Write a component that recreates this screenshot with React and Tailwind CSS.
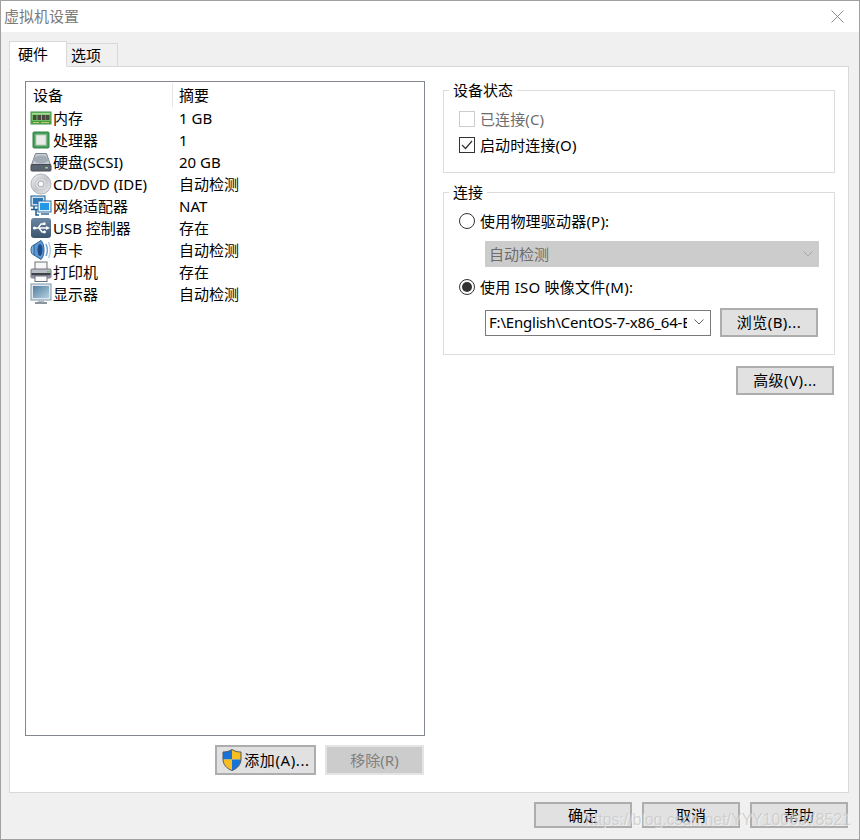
const rows = [
  ['内存', '1 GB', MemoryIcon],
  ['处理器', '1', CpuIcon],
  ['硬盘(SCSI)', '20 GB', DiskIcon],
  ['CD/DVD (IDE)', '自动检测', CdIcon],
  ['网络适配器', 'NAT', NetIcon],
  ['USB 控制器', '存在', UsbIcon],
  ['声卡', '自动检测', SoundIcon],
  ['打印机', '存在', PrinterIcon],
  ['显示器', '自动检测', MonitorIcon],
];

// ── Device icons ──────────────────────────────────────────────────────────────
function MemoryIcon() {
  return (
    <svg width="22" height="22" viewBox="0 0 22 22">
      <rect x="1" y="5" width="20" height="12" fill="#6fbf63" stroke="#3f8f48" />
      <rect x="2" y="6" width="18" height="1.500" fill="#a5dc93" />
      <rect x="3" y="8" width="3.500" height="5" fill="#4a4a3c" />
      <rect x="7.500" y="8" width="3.500" height="5" fill="#4a4a3c" />
      <rect x="12" y="8" width="3.500" height="5" fill="#4a4a3c" />
      <rect x="16" y="8" width="3.500" height="5" fill="#4a4a3c" />
      <rect x="1.500" y="14" width="19" height="2.500" fill="#3d9a45" />
      <path d="M3 15.500h6M11 15.500h8" stroke="#d2c46a" strokeWidth="1" />
    </svg>
  );
}

function CpuIcon() {
  return (
    <svg width="22" height="22" viewBox="0 0 22 22">
      <rect x="3" y="3" width="16" height="16" rx="1" fill="#47a05b" stroke="#2f8045" />
      <rect x="6" y="6" width="10" height="10" fill="#e9ece8" stroke="#c5cfc3" />
    </svg>
  );
}

function DiskIcon() {
  return (
    <svg width="22" height="22" viewBox="0 0 22 22">
      <path d="M5.500 2.500h11L20.500 14h-19z" fill="#c6ccd3" stroke="#7c8590" />
      <ellipse cx="11" cy="8.500" rx="7.500" ry="4" fill="#a3acb6" />
      <rect x="1" y="13.500" width="20" height="6.500" rx="1" fill="#5a6470" stroke="#434a54" />
      <rect x="15" y="16" width="3" height="1.500" fill="#8fd07a" />
    </svg>
  );
}

function CdIcon() {
  return (
    <svg width="22" height="22" viewBox="0 0 22 22">
      <defs>
        <linearGradient id="cd" x1="0" y1="0" x2="1" y2="1">
          <stop offset="0" stopColor="#f0f1f2" />
          <stop offset="0.500" stopColor="#c3c6ca" />
          <stop offset="1" stopColor="#eceded" />
        </linearGradient>
      </defs>
      <circle cx="11" cy="11" r="10" fill="url(#cd)" stroke="#b3b6ba" />
      <circle cx="11" cy="11" r="5.500" fill="#dcdee0" stroke="#c9cbce" />
      <circle cx="11" cy="11" r="3" fill="#f6f6f6" stroke="#a6a9ad" />
      <circle cx="11" cy="11" r="1" fill="#ffffff" />
    </svg>
  );
}

function NetIcon() {
  return (
    <svg width="22" height="22" viewBox="0 0 22 22">
      <rect x="1" y="1" width="14" height="10" fill="#cfe0ee" stroke="#1f5c92" />
      <rect x="3" y="3" width="10" height="6" fill="#2f79b8" />
      <path d="M4 11v3M1 14.500h9M6 14.500V20h3" fill="none" stroke="#1f5c92" strokeWidth="1.500" />
      <rect x="8" y="6" width="13" height="11" fill="#e3edf5" stroke="#2f6ea6" />
      <rect x="10" y="8" width="9" height="7" fill="#2398e6" />
      <rect x="11" y="18" width="8" height="2" fill="#6c8fae" />
    </svg>
  );
}

function UsbIcon() {
  return (
    <svg width="22" height="22" viewBox="0 0 22 22">
      <defs>
        <linearGradient id="usb" x1="0" y1="0" x2="0" y2="1">
          <stop offset="0" stopColor="#6a87a3" />
          <stop offset="1" stopColor="#3c546e" />
        </linearGradient>
      </defs>
      <rect x="1" y="1" width="20" height="20" rx="3" fill="url(#usb)" />
      <path d="M4 11h13M8 11l3-4h3M9 11l3 4h2" fill="none" stroke="#ffffff" strokeWidth="1.300" />
      <path d="M16 9l4 2-4 2z" fill="#ffffff" />
      <rect x="13" y="5.500" width="2.500" height="2.500" fill="#ffffff" />
      <circle cx="14.500" cy="15" r="1.400" fill="#ffffff" />
      <circle cx="4.500" cy="11" r="1.600" fill="#ffffff" />
    </svg>
  );
}

function SoundIcon() {
  return (
    <svg width="22" height="22" viewBox="0 0 22 22">
      <ellipse cx="4" cy="11" rx="3" ry="5" fill="#7fb0dc" stroke="#2f6aa5" />
      <path d="M4 6L11 1.500c2 2 3 5.500 3 9.500s-1 7.500-3 9.500L4 16z" fill="#5d96d0" stroke="#28609b" />
      <ellipse cx="10" cy="11" rx="2.500" ry="6" fill="#1c4f8a" />
      <path d="M16 5c1.700 3.700 1.700 8.300 0 12" fill="none" stroke="#6fa3d6" strokeWidth="1.500" />
      <path d="M18.500 3c2.300 5 2.300 11 0 16" fill="none" stroke="#b3d0ea" strokeWidth="1.500" />
    </svg>
  );
}

function PrinterIcon() {
  return (
    <svg width="22" height="22" viewBox="0 0 22 22">
      <rect x="5" y="1" width="12" height="8" fill="#f6f6f6" stroke="#6f747b" />
      <rect x="1" y="8" width="20" height="9" rx="1" fill="#b9bdc4" stroke="#7a7084" />
      <rect x="1.500" y="12" width="19" height="2.500" fill="#3f4248" />
      <rect x="1.500" y="14.500" width="19" height="2" fill="#8f8aa0" />
      <rect x="5" y="15" width="12" height="5.500" fill="#fbfbfb" stroke="#6f747b" />
      <rect x="17" y="10" width="2.500" height="1.500" fill="#5fc25f" />
    </svg>
  );
}

function MonitorIcon() {
  return (
    <svg width="22" height="22" viewBox="0 0 22 22">
      <defs>
        <linearGradient id="scr" x1="0" y1="0" x2="1" y2="1">
          <stop offset="0" stopColor="#517f9f" />
          <stop offset="1" stopColor="#b4cfe0" />
        </linearGradient>
      </defs>
      <rect x="1" y="1" width="20" height="16" fill="#e1e7ec" stroke="#7c97ac" />
      <rect x="3" y="3" width="16" height="12" fill="url(#scr)" />
      <rect x="8" y="17" width="6" height="2" fill="#b6bec5" />
      <rect x="5" y="19" width="12" height="2" fill="#8b959e" />
    </svg>
  );
}

function ShieldIcon() {
  return (
    <svg width="22" height="24" viewBox="0 0 22 24" className="shrink-0">
      <path d="M11 1.500v10H2V4C5.500 4 8.500 3.200 11 1.500z" fill="#1773d6" />
      <path d="M11 1.500c2.500 1.700 5.500 2.500 9 2.500v7.500h-9z" fill="#f8bd1f" />
      <path d="M2 11.500h9v11C6 20.500 2.500 17 2 11.500z" fill="#f8bd1f" />
      <path d="M11 11.500h9c-.5 5.500-4 9-9 11z" fill="#1773d6" />
      <path d="M11 1.500c2.500 1.700 5.500 2.500 9 2.500v7c0 5.500-3.500 9.500-9 11.500-5.500-2-9-6-9-11.500V4c3.500 0 6.500-.8 9-2.500z" fill="none" stroke="#4f5a66" strokeWidth="1" />
    </svg>
  );
}

function Chevron({ color }) {
  return (
    <svg width="10" height="6" viewBox="0 0 10 6">
      <path d="M0.500 0.500 5 5l4.500-4.500" fill="none" stroke={color} />
    </svg>
  );
}

// ── Form controls ─────────────────────────────────────────────────────────────
function Button({ className = '', disabled, children }) {
  return (
    <div
      className={`flex items-center justify-center text-[15px] ${
        disabled
          ? 'bg-[#cccccc] border-2 border-[#e4e4e4] text-[#7f7f7f]'
          : 'bg-[#e1e1e1] border-2 border-[#adadad] text-black'
      } ${className}`}
    >
      {children}
    </div>
  );
}

function Radio({ checked }) {
  return (
    <span className="w-[16px] h-[16px] rounded-full border border-[#333333] bg-white flex items-center justify-center shrink-0">
      {checked && <span className="w-[10px] h-[10px] rounded-full bg-[#333333]" />}
    </span>
  );
}

// ── Main dialog ───────────────────────────────────────────────────────────────
export default function App() {
  return (
    <div className="relative w-[860px] h-[840px] flex flex-col bg-[#f0f0f0] border border-[#a0a0a0] overflow-hidden font-['Noto_Sans','Noto_Sans_CJK_SC',sans-serif] text-[15px] leading-[20px] text-black">
      {/* Title bar */}
      <div className="h-[31px] shrink-0 bg-white flex items-center justify-between pl-[3px] pr-[15px] pb-[2px]">
        <span className="text-[#7b7b7b]">虚拟机设置</span>
        <svg width="13" height="13" viewBox="0 0 13 13" className="mt-[2px]">
          <path d="M0.500 0.500l12 12M12.500 0.500l-12 12" stroke="#8a8a8a" strokeWidth="1" />
        </svg>
      </div>

      {/* Tabs */}
      <div className="h-[34px] shrink-0 flex items-end pl-[8px]">
        <div className="w-[58px] h-[26px] -mb-px z-10 bg-white border border-[#d9d9d9] border-b-white pl-[8px] pb-[1px] flex items-center">硬件</div>
        <div className="w-[51px] h-[23px] bg-[#f0f0f0] border border-l-0 border-b-0 border-[#d9d9d9] pl-[4px] flex items-center">选项</div>
      </div>

      {/* Panel */}
      <div className="ml-[8px] w-[840px] h-[727px] shrink-0 bg-white border border-[#d9d9d9] flex pl-[15px] pt-[14px]">
        {/* Device list */}
        <div className="w-[400px] shrink-0 flex flex-col">
          <div className="h-[655px] border border-[#828790] flex flex-col">
            <div className="h-[24px] shrink-0 flex mt-px">
              <div className="w-[147px] pl-[7px] leading-[24px] border-r border-[#e5e5e5]">设备</div>
              <div className="pl-[6px] leading-[24px]">摘要</div>
            </div>
            {rows.map(([name, summary, Icon]) => (
              <div key={name} className="h-[22px] shrink-0 flex items-center pl-[4px]">
                <span className="w-[23px] shrink-0 flex items-center"><Icon /></span>
                <span className="w-[126px] shrink-0 whitespace-nowrap">{name}</span>
                <span>{summary}</span>
              </div>
            ))}
          </div>
          <div className="flex justify-end gap-[9px] mt-[9px] pr-px">
            <Button className="w-[101px] h-[30px] gap-[1px] tracking-[0.6px]"><ShieldIcon />添加(A)...</Button>
            <Button disabled className="w-[99px] h-[30px]">移除(R)</Button>
          </div>
        </div>

        {/* Right column */}
        <div className="w-[392px] ml-[18px] shrink-0 flex flex-col">
          <fieldset className="h-[92px] border border-[#dcdcdc] pl-[15px]">
            <legend className="-ml-[10px] px-[4px] h-[18px] leading-[18px]">设备状态</legend>
            <div className="flex items-center h-[20px] mt-[10px] gap-[5px] text-[#6d6d6d] tracking-[0.1px]">
              <span className="w-[16px] h-[16px] border border-[#cccccc] bg-white shrink-0" />
              已连接(C)
            </div>
            <div className="flex items-center h-[20px] mt-[6px] gap-[5px] tracking-[0.1px]">
              <span className="w-[16px] h-[16px] border border-[#333333] bg-white shrink-0 flex items-center justify-center">
                <svg width="12" height="10" viewBox="0 0 12 10">
                  <path d="M1 5l3.500 3.500L11 1" fill="none" stroke="#333333" strokeWidth="1.200" />
                </svg>
              </span>
              启动时连接(O)
            </div>
          </fieldset>

          <fieldset className="h-[172px] mt-[10px] border border-[#dcdcdc] pl-[15px]">
            <legend className="-ml-[10px] px-[4px] h-[18px] leading-[18px]">连接</legend>
            <div className="flex items-center h-[20px] mt-[10px] gap-[5px] tracking-[0.2px]">
              <Radio />
              使用物理驱动器(P):
            </div>
            <div className="ml-[26px] mt-[10px] w-[334px] h-[26px] bg-[#cccccc] flex items-center justify-between pl-[4px] pr-[6px] text-[#6d6d6d]">
              自动检测
              <Chevron color="#a6a6a6" />
            </div>
            <div className="flex items-center h-[20px] mt-[10px] gap-[5px] tracking-[0.25px]">
              <Radio checked />
              使用 ISO 映像文件(M):
            </div>
            <div className="flex items-center ml-[26px] mt-[11px] gap-[9px]">
              <div className="w-[226px] h-[26px] bg-white border border-[#7a7a7a] flex items-center justify-between pl-[3px] pr-[6px] pb-[1px]">
                <span className="w-[198px] overflow-hidden whitespace-nowrap tracking-[-0.2px]">F:\English\CentOS-7-x86_64-Everything</span>
                <Chevron color="#606060" />
              </div>
              <Button className="w-[98px] h-[29px] tracking-[0.45px] pb-[1px]">浏览(B)...</Button>
            </div>
          </fieldset>

          <div className="flex justify-end mt-[11px] pr-px">
            <Button className="w-[98px] h-[29px] tracking-[0.45px] pb-[1px]">高级(V)...</Button>
          </div>
        </div>
      </div>

      {/* Footer */}
      <div className="flex justify-end gap-[10px] pt-[9px] pr-[11px]">
        <Button className="w-[98px] h-[26px]">确定</Button>
        <Button className="w-[98px] h-[26px]">取消</Button>
        <Button className="w-[98px] h-[26px]">帮助</Button>
      </div>

      {/* Watermark */}
      <span className="absolute left-[584px] top-[809px] font-['Liberation_Sans',sans-serif] text-[16px] leading-[20px] tracking-[-0.08px] whitespace-nowrap text-[#c4c4c4]/70 [text-shadow:1px_1px_0_rgba(255,255,255,0.5)]">https://blog.csdn.net/YYY1006378521</span>
    </div>
  );
}
